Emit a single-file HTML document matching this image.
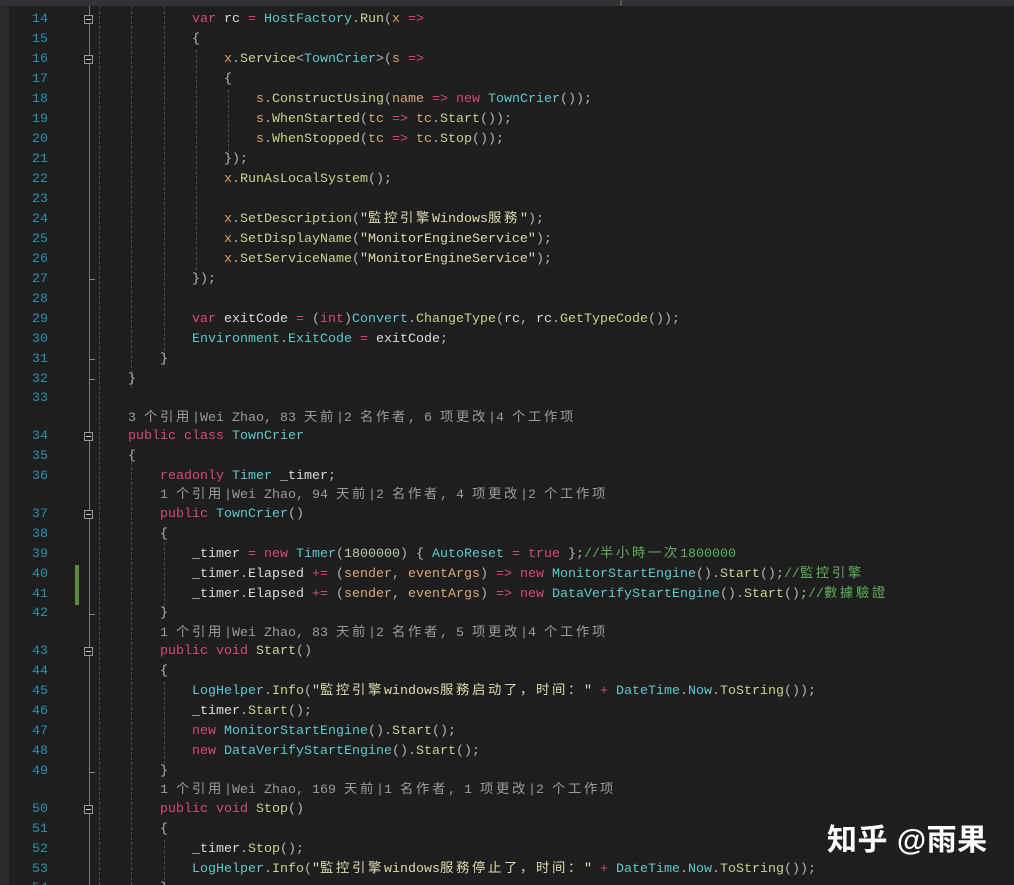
<!DOCTYPE html>
<html><head><meta charset="utf-8"><style>
html,body{margin:0;width:1014px;height:885px;overflow:hidden}
body{background:#1e1e1e;position:relative;font-family:"Liberation Mono","Noto Sans CJK SC",monospace;font-size:13.33px}
.l{position:absolute;left:128px;white-space:pre;height:20px;line-height:20px;color:#dcdcdc}
.n{position:absolute;width:48px;text-align:right;left:0;color:#2b91af;line-height:20px;height:20px;font-size:13.33px}
.k{color:#d8487c}.t{color:#5fc8d0}.m{color:#c8d48e}.v{color:#e0a05c}.s{color:#e2d9ac}.c{color:#5fae5a}.p{color:#b4b4b4}.o{color:#d8487c}.num{color:#b5cea8}.g{color:#9a9a9a}.pa{color:#d8a878}
.z{letter-spacing:2.67px}
.gd{position:absolute;width:0;border-left:1px dashed #4a4a4a}
.box{position:absolute;left:84px;width:9px;height:9px;border:1px solid #999;background:#1e1e1e;box-sizing:border-box}
.box:after{content:"";position:absolute;left:1px;top:3px;width:5px;height:1px;background:#ccc}
.tk{position:absolute;left:89px;width:6px;height:1px;background:#888}
#w{position:absolute;left:0;top:2px;width:1014px;height:883px;overflow:hidden}
</style></head><body>
<div style="position:absolute;left:0;top:0;width:1014px;height:6px;background:#333337"></div>
<div style="position:absolute;left:620px;top:0;width:2px;height:6px;background:#555"></div>
<div style="position:absolute;left:0;top:6px;width:9px;height:879px;background:#2a2a2c"></div>
<div style="position:absolute;left:89px;top:6px;width:1px;height:879px;background:#777"></div>
<div style="position:absolute;left:75px;top:565px;width:4px;height:40px;background:#5a8a3a"></div>

<div class="gd" style="left:99px;top:6px;height:879px"></div>
<div class="gd" style="left:131px;top:6px;height:382px"></div>
<div class="gd" style="left:131px;top:462px;height:423px"></div>
<div class="gd" style="left:164px;top:6px;height:360px"></div>
<div class="gd" style="left:164px;top:542px;height:64px"></div>
<div class="gd" style="left:164px;top:682px;height:82px"></div>
<div class="gd" style="left:164px;top:840px;height:45px"></div>
<div class="gd" style="left:196px;top:50px;height:220px"></div>
<div class="gd" style="left:228px;top:90px;height:62px"></div>

<div id="w">
<div class="box" style="top:13px"></div><div class="box" style="top:53px"></div>
<div class="box" style="top:430px"></div><div class="box" style="top:508px"></div>
<div class="box" style="top:645px"></div><div class="box" style="top:803px"></div>
<div class="tk" style="top:277px"></div><div class="tk" style="top:357px"></div><div class="tk" style="top:377px"></div>
<div class="tk" style="top:612px"></div><div class="tk" style="top:770px"></div>

<div class="n" style="top:8px">14</div><div class="l" style="top:8px">        <span class="k">var</span> rc <span class="o">=</span> <span class="t">HostFactory</span><span class="p">.</span><span class="m">Run</span><span class="p">(</span><span class="v">x</span> <span class="o">=&gt;</span></div>
<div class="n" style="top:28px">15</div><div class="l" style="top:28px">        <span class="p">{</span></div>
<div class="n" style="top:48px">16</div><div class="l" style="top:48px">            <span class="v">x</span><span class="p">.</span><span class="m">Service</span><span class="p">&lt;</span><span class="t">TownCrier</span><span class="p">&gt;(</span><span class="v">s</span> <span class="o">=&gt;</span></div>
<div class="n" style="top:68px">17</div><div class="l" style="top:68px">            <span class="p">{</span></div>
<div class="n" style="top:88px">18</div><div class="l" style="top:88px">                <span class="v">s</span><span class="p">.</span><span class="m">ConstructUsing</span><span class="p">(</span><span class="pa">name</span> <span class="o">=&gt;</span> <span class="k">new</span> <span class="t">TownCrier</span><span class="p">());</span></div>
<div class="n" style="top:108px">19</div><div class="l" style="top:108px">                <span class="v">s</span><span class="p">.</span><span class="m">WhenStarted</span><span class="p">(</span><span class="pa">tc</span> <span class="o">=&gt;</span> <span class="pa">tc</span><span class="p">.</span><span class="m">Start</span><span class="p">());</span></div>
<div class="n" style="top:128px">20</div><div class="l" style="top:128px">                <span class="v">s</span><span class="p">.</span><span class="m">WhenStopped</span><span class="p">(</span><span class="pa">tc</span> <span class="o">=&gt;</span> <span class="pa">tc</span><span class="p">.</span><span class="m">Stop</span><span class="p">());</span></div>
<div class="n" style="top:148px">21</div><div class="l" style="top:148px">            <span class="p">});</span></div>
<div class="n" style="top:168px">22</div><div class="l" style="top:168px">            <span class="v">x</span><span class="p">.</span><span class="m">RunAsLocalSystem</span><span class="p">();</span></div>
<div class="n" style="top:188px">23</div>
<div class="n" style="top:208px">24</div><div class="l" style="top:208px">            <span class="v">x</span><span class="p">.</span><span class="m">SetDescription</span><span class="p">(</span><span class="s">"<span class="z">監控引擎</span>Windows<span class="z">服務</span>"</span><span class="p">);</span></div>
<div class="n" style="top:228px">25</div><div class="l" style="top:228px">            <span class="v">x</span><span class="p">.</span><span class="m">SetDisplayName</span><span class="p">(</span><span class="s">"MonitorEngineService"</span><span class="p">);</span></div>
<div class="n" style="top:248px">26</div><div class="l" style="top:248px">            <span class="v">x</span><span class="p">.</span><span class="m">SetServiceName</span><span class="p">(</span><span class="s">"MonitorEngineService"</span><span class="p">);</span></div>
<div class="n" style="top:268px">27</div><div class="l" style="top:268px">        <span class="p">});</span></div>
<div class="n" style="top:288px">28</div>
<div class="n" style="top:308px">29</div><div class="l" style="top:308px">        <span class="k">var</span> exitCode <span class="o">=</span> <span class="p">(</span><span class="k">int</span><span class="p">)</span><span class="t">Convert</span><span class="p">.</span><span class="m">ChangeType</span><span class="p">(</span>rc<span class="p">,</span> rc<span class="p">.</span><span class="m">GetTypeCode</span><span class="p">());</span></div>
<div class="n" style="top:328px">30</div><div class="l" style="top:328px">        <span class="t">Environment</span><span class="p">.</span><span class="t">ExitCode</span> <span class="o">=</span> exitCode<span class="p">;</span></div>
<div class="n" style="top:348px">31</div><div class="l" style="top:348px">    <span class="p">}</span></div>
<div class="n" style="top:368px">32</div><div class="l" style="top:368px"><span class="p">}</span></div>
<div class="n" style="top:387px">33</div>
<div class="l g" style="top:407px">3 <span class="z">个引用</span>|Wei Zhao, 83 <span class="z">天前</span>|2 <span class="z">名作者</span>, 6 <span class="z">项更改</span>|4 <span class="z">个工作项</span></div>
<div class="n" style="top:425px">34</div><div class="l" style="top:425px"><span class="k">public</span> <span class="k">class</span> <span class="t">TownCrier</span></div>
<div class="n" style="top:445px">35</div><div class="l" style="top:445px"><span class="p">{</span></div>
<div class="n" style="top:465px">36</div><div class="l" style="top:465px">    <span class="k">readonly</span> <span class="t">Timer</span> _timer<span class="p">;</span></div>
<div class="l g" style="top:484px">    1 <span class="z">个引用</span>|Wei Zhao, 94 <span class="z">天前</span>|2 <span class="z">名作者</span>, 4 <span class="z">项更改</span>|2 <span class="z">个工作项</span></div>
<div class="n" style="top:503px">37</div><div class="l" style="top:503px">    <span class="k">public</span> <span class="t">TownCrier</span><span class="p">()</span></div>
<div class="n" style="top:523px">38</div><div class="l" style="top:523px">    <span class="p">{</span></div>
<div class="n" style="top:543px">39</div><div class="l" style="top:543px">        _timer <span class="o">=</span> <span class="k">new</span> <span class="t">Timer</span><span class="p">(</span><span class="num">1800000</span><span class="p">)</span> <span class="p">{</span> <span class="t">AutoReset</span> <span class="o">=</span> <span class="k">true</span> <span class="p">};</span><span class="c">//<span class="z">半小時一次</span>1800000</span></div>
<div class="n" style="top:563px">40</div><div class="l" style="top:563px">        _timer<span class="p">.</span>Elapsed <span class="o">+=</span> <span class="p">(</span><span class="pa">sender</span><span class="p">,</span> <span class="pa">eventArgs</span><span class="p">)</span> <span class="o">=&gt;</span> <span class="k">new</span> <span class="t">MonitorStartEngine</span><span class="p">().</span><span class="m">Start</span><span class="p">();</span><span class="c">//<span class="z">監控引擎</span></span></div>
<div class="n" style="top:583px">41</div><div class="l" style="top:583px">        _timer<span class="p">.</span>Elapsed <span class="o">+=</span> <span class="p">(</span><span class="pa">sender</span><span class="p">,</span> <span class="pa">eventArgs</span><span class="p">)</span> <span class="o">=&gt;</span> <span class="k">new</span> <span class="t">DataVerifyStartEngine</span><span class="p">().</span><span class="m">Start</span><span class="p">();</span><span class="c">//<span class="z">數據驗證</span></span></div>
<div class="n" style="top:602px">42</div><div class="l" style="top:602px">    <span class="p">}</span></div>
<div class="l g" style="top:622px">    1 <span class="z">个引用</span>|Wei Zhao, 83 <span class="z">天前</span>|2 <span class="z">名作者</span>, 5 <span class="z">项更改</span>|4 <span class="z">个工作项</span></div>
<div class="n" style="top:640px">43</div><div class="l" style="top:640px">    <span class="k">public</span> <span class="k">void</span> <span class="m">Start</span><span class="p">()</span></div>
<div class="n" style="top:660px">44</div><div class="l" style="top:660px">    <span class="p">{</span></div>
<div class="n" style="top:680px">45</div><div class="l" style="top:680px">        <span class="t">LogHelper</span><span class="p">.</span><span class="m">Info</span><span class="p">(</span><span class="s">"<span class="z">監控引擎</span>windows<span class="z">服務启动了，时间：</span>"</span> <span class="o">+</span> <span class="t">DateTime</span><span class="p">.</span><span class="t">Now</span><span class="p">.</span><span class="m">ToString</span><span class="p">());</span></div>
<div class="n" style="top:700px">46</div><div class="l" style="top:700px">        _timer<span class="p">.</span><span class="m">Start</span><span class="p">();</span></div>
<div class="n" style="top:720px">47</div><div class="l" style="top:720px">        <span class="k">new</span> <span class="t">MonitorStartEngine</span><span class="p">().</span><span class="m">Start</span><span class="p">();</span></div>
<div class="n" style="top:740px">48</div><div class="l" style="top:740px">        <span class="k">new</span> <span class="t">DataVerifyStartEngine</span><span class="p">().</span><span class="m">Start</span><span class="p">();</span></div>
<div class="n" style="top:760px">49</div><div class="l" style="top:760px">    <span class="p">}</span></div>
<div class="l g" style="top:779px">    1 <span class="z">个引用</span>|Wei Zhao, 169 <span class="z">天前</span>|1 <span class="z">名作者</span>, 1 <span class="z">项更改</span>|2 <span class="z">个工作项</span></div>
<div class="n" style="top:798px">50</div><div class="l" style="top:798px">    <span class="k">public</span> <span class="k">void</span> <span class="m">Stop</span><span class="p">()</span></div>
<div class="n" style="top:818px">51</div><div class="l" style="top:818px">    <span class="p">{</span></div>
<div class="n" style="top:838px">52</div><div class="l" style="top:838px">        _timer<span class="p">.</span><span class="m">Stop</span><span class="p">();</span></div>
<div class="n" style="top:858px">53</div><div class="l" style="top:858px">        <span class="t">LogHelper</span><span class="p">.</span><span class="m">Info</span><span class="p">(</span><span class="s">"<span class="z">監控引擎</span>windows<span class="z">服務停止了，时间：</span>"</span> <span class="o">+</span> <span class="t">DateTime</span><span class="p">.</span><span class="t">Now</span><span class="p">.</span><span class="m">ToString</span><span class="p">());</span></div>
<div class="n" style="top:877px">54</div><div class="l" style="top:877px">    <span class="p">}</span></div>
</div>

<div style="position:absolute;left:827px;top:821px;color:#fff;font-family:'Liberation Sans','Noto Sans CJK SC',sans-serif;font-size:30px;font-weight:bold;line-height:40px;white-space:nowrap;letter-spacing:0.5px">知乎 @雨果</div>
</body></html>
